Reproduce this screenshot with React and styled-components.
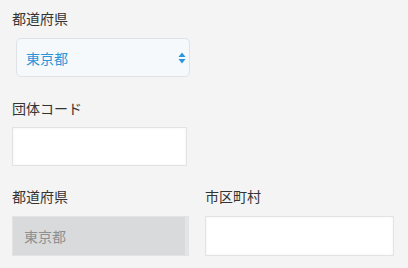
import React from "react";
import styled, { createGlobalStyle } from "styled-components";

const GlobalStyle = createGlobalStyle`
  html, body {
    margin: 0;
    padding: 0;
    background: #f4f4f4;
  }
  body {
    font-family: "Noto Sans CJK JP", "Noto Sans", sans-serif;
    color: #333333;
  }
`;

// フォーム全体
const Form = styled.div`
  padding: 8px 12px 0 12px;
  display: flex;
  flex-direction: column;
`;

const Field = styled.div`
  display: flex;
  flex-direction: column;
  width: ${({ w }) => w || "auto"};
  margin-bottom: ${({ mb }) => mb || 0};
`;

const Label = styled.label`
  font-size: 14px;
  line-height: 20px;
  height: 20px;
  margin-bottom: ${({ gap }) => gap || "10px"};
  color: #333333;
`;

// セレクトボックス
const SelectBox = styled.div`
  position: relative;
  margin-left: 4px;
  width: 174px;
  height: 39px;
  box-sizing: border-box;
  border: 1px solid #dfe3e6;
  border-radius: 5px;
  background: #f5f9fb;
  display: flex;
  align-items: center;
  padding-left: 9px;
  font-size: 14px;
  color: #2a95d8;
`;

const Arrows = styled.svg`
  position: absolute;
  right: 2px;
  top: 50%;
  transform: translateY(-50%);
`;

const TextInput = styled.div`
  box-sizing: border-box;
  width: 100%;
  height: ${({ h }) => h || "39px"};
  border: 1px solid #e2e4e4;
  background: ${({ disabled }) => (disabled ? "#d9dadb" : "#ffffff")};
  box-shadow: ${({ disabled }) =>
    disabled ? "inset -3px 0 0 #e3e6e6" : "inset 0 0 3px rgba(0, 0, 0, 0.06)"};
  display: flex;
  align-items: center;
  padding-left: 11px;
  font-size: 14px;
  color: #8d8f91;
`;

const Row = styled.div`
  display: flex;
  gap: 16px;
`;

const App = () => {
  return (
    <>
      <GlobalStyle />
      <Form>
        <Field mb="21px">
          <Label>都道府県</Label>
          <SelectBox>
            東京都
            <Arrows width="10" height="14" viewBox="0 0 10 14">
              <path d="M5 1.5 L8.5 6 H1.5 Z" fill="#2a95d8" />
              <path d="M5 12.5 L8.5 8 H1.5 Z" fill="#2a95d8" />
            </Arrows>
          </SelectBox>
        </Field>
        <Field w="175px" mb="20px">
          <Label gap="9px">団体コード</Label>
          <TextInput />
        </Field>
        <Row>
          <Field w="177px">
            <Label>都道府県</Label>
            <TextInput disabled h="40px">東京都</TextInput>
          </Field>
          <Field w="189px">
            <Label>市区町村</Label>
            <TextInput h="40px" />
          </Field>
        </Row>
      </Form>
    </>
  );
};

export default App;
